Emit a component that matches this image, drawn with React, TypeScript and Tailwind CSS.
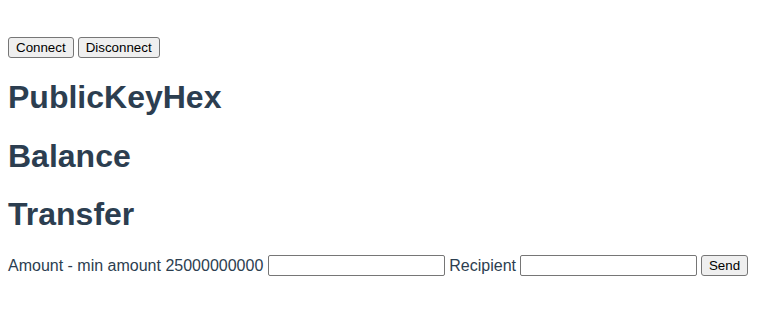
export default function App() {
  const btn =
    "px-[7px] py-[1px] text-[13.33px] leading-[17px] border border-[#767676] bg-[#efefef] rounded-[3px] text-black";
  const input =
    "w-[177px] h-[21px] border border-[#767676] rounded-[2px] bg-white px-[2px] text-[13.33px]";

  return (
    <div className="m-2 pt-[29px] text-[#2c3e50] font-['Liberation_Sans',Arial,sans-serif]">
      {/* Wallet buttons */}
      <div className="flex gap-1">
        <button className={btn}>Connect</button>
        <button className={btn}>Disconnect</button>
      </div>

      <h1 className="my-[21.44px] text-[32px] font-bold leading-[37px]">PublicKeyHex</h1>
      <h1 className="my-[21.44px] text-[32px] font-bold leading-[37px]">Balance</h1>
      <h1 className="mt-[21.44px] mb-[21px] text-[32px] font-bold leading-[37px]">Transfer</h1>

      <div className="flex items-center gap-1 text-base leading-[23px]">
        <span>Amount - min amount 25000000000</span>
        <input className={`${input} ml-px`} />
        <span>Recipient</span>
        <input className={input} />
        <button className={btn}>Send</button>
      </div>
    </div>
  );
}
